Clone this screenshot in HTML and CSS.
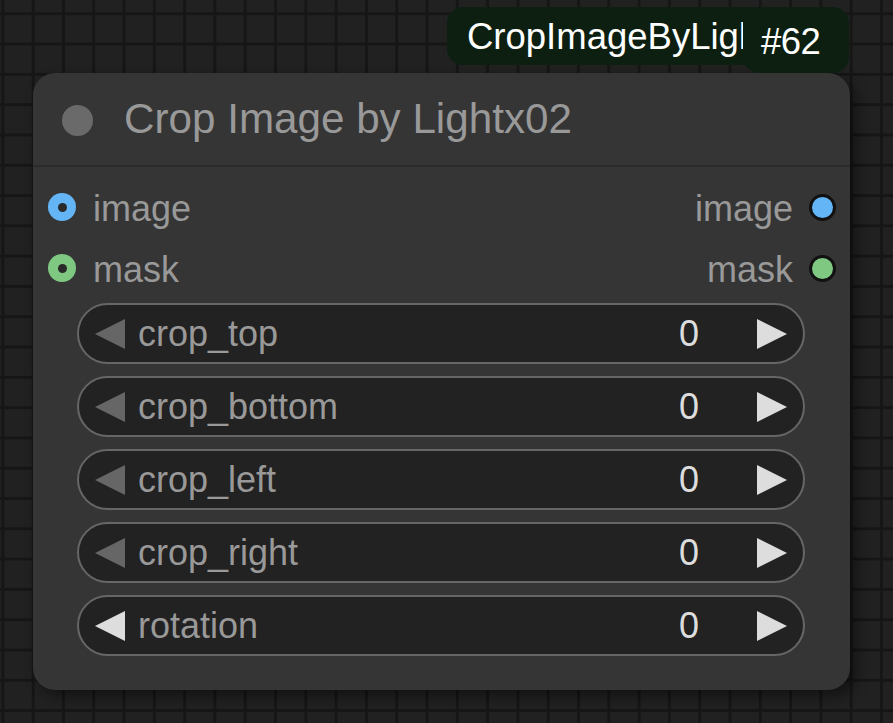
FILE: index.html
```html
<!DOCTYPE html>
<html>
<head>
<meta charset="utf-8">
<link rel="stylesheet" href="styles.css">
</head>
<body>
<div class="canvas">
  <div class="badges">
    <div class="pill pill-name"><span class="pill-text">CropImageByLightx02</span></div>
    <div class="pill pill-id">#62</div>
  </div>
  <div class="node">
    <div class="title">
      <span class="title-dot"></span>
      <span class="title-text">Crop Image by Lightx02</span>
    </div>
    <div class="body">
      <div class="slots">
        <div class="slot-row">
          <div class="in"><span class="dot-in blue"></span><span class="slot-label">image</span></div>
          <div class="out"><span class="slot-label">image</span><span class="dot-out blue"></span></div>
        </div>
        <div class="slot-row">
          <div class="in"><span class="dot-in green"></span><span class="slot-label">mask</span></div>
          <div class="out"><span class="slot-label">mask</span><span class="dot-out green"></span></div>
        </div>
      </div>
      <div class="widgets">
        <div class="widget"><span class="arrow-left dim"></span><span class="w-label">crop_top</span><span class="w-value">0</span><span class="arrow-right"></span></div>
        <div class="widget"><span class="arrow-left dim"></span><span class="w-label">crop_bottom</span><span class="w-value">0</span><span class="arrow-right"></span></div>
        <div class="widget"><span class="arrow-left dim"></span><span class="w-label">crop_left</span><span class="w-value">0</span><span class="arrow-right"></span></div>
        <div class="widget"><span class="arrow-left dim"></span><span class="w-label">crop_right</span><span class="w-value">0</span><span class="arrow-right"></span></div>
        <div class="widget"><span class="arrow-left"></span><span class="w-label">rotation</span><span class="w-value">0</span><span class="arrow-right"></span></div>
      </div>
    </div>
  </div>
</div>
</body>
</html>
```

FILE: styles.css
```css
html, body {
  margin: 0;
  padding: 0;
}
body {
  width: 893px;
  height: 723px;
  overflow: hidden;
  font-family: "Liberation Sans", Arial, sans-serif;
  background-color: #212121;
  background-image:
    linear-gradient(to right, #161616 2.6px, transparent 2.6px),
    linear-gradient(to bottom, #161616 2.6px, transparent 2.6px);
  background-size: 30.3px 30.3px;
  background-position: 1.4px 12.3px;
}
.canvas {
  padding-top: 7px;
}
.badges {
  display: flex;
  align-items: flex-start;
  margin-left: 447px;
  height: 66px;
}
.pill {
  background: #0d1f11;
  border-radius: 16px;
  color: #ffffff;
  font-size: 36.5px;
  display: flex;
  align-items: center;
  box-sizing: border-box;
}
.pill-name {
  height: 58px;
  width: 320px;
  padding-left: 20px;
  padding-top: 2px;
}
.pill-text {
  display: block;
  width: 276px;
  overflow: hidden;
  white-space: nowrap;
}
.pill-id {
  height: 66px;
  width: 106px;
  margin-left: -24px;
  padding-left: 18px;
  padding-top: 4px;
  letter-spacing: -0.5px;
}
.node {
  margin-left: 33px;
  width: 817px;
  height: 617px;
  background: #353535;
  border-radius: 22px;
  box-shadow: 6px 6px 14px rgba(0, 0, 0, 0.45);
  display: flex;
  flex-direction: column;
}
.title {
  height: 92px;
  border-bottom: 2px solid #2b2b2b;
  display: flex;
  align-items: center;
  padding-left: 29px;
  gap: 31px;
}
.title-dot {
  width: 31px;
  height: 31px;
  border-radius: 50%;
  background: #6a6a6a;
  margin-top: 2px;
}
.title-text {
  font-size: 42.2px;
  color: #999999;
}
.body {
  display: flex;
  flex-direction: column;
  padding-top: 10px;
}
.slots {
  display: flex;
  flex-direction: column;
  gap: 1px;
}
.slot-row {
  height: 60px;
  display: flex;
  align-items: center;
  justify-content: space-between;
  padding-left: 15px;
  padding-right: 14px;
}
.in, .out {
  display: flex;
  align-items: center;
}
.in {
  gap: 17px;
}
.out {
  gap: 16px;
}
.slot-label {
  font-size: 36px;
  color: #999999;
  padding-top: 3px;
}
.dot-in {
  width: 28px;
  height: 28px;
  border-radius: 50%;
  box-sizing: border-box;
  display: flex;
  align-items: center;
  justify-content: center;
}
.dot-in::after {
  content: "";
  width: 9px;
  height: 9px;
  border-radius: 50%;
  background: #2a2a2a;
}
.dot-out {
  width: 27px;
  height: 27px;
  border-radius: 50%;
  box-sizing: border-box;
  border: 3px solid #111111;
}
.blue { background: #64b5f6; }
.green { background: #7fc882; }
.widgets {
  display: flex;
  flex-direction: column;
  gap: 12px;
  padding: 5px 45px 0 44px;
}
.widget {
  height: 61px;
  box-sizing: border-box;
  border: 2.5px solid #666666;
  border-radius: 31px;
  background: #222222;
  display: flex;
  align-items: center;
  padding-left: 16px;
  padding-right: 16px;
}
.arrow-left, .arrow-right {
  width: 0;
  height: 0;
  border-top: 15px solid transparent;
  border-bottom: 15px solid transparent;
}
.arrow-left {
  border-right: 30px solid #dddddd;
}
.arrow-left.dim {
  border-right-color: #666666;
}
.arrow-right {
  border-left: 30px solid #dddddd;
}
.w-label {
  font-size: 36px;
  color: #999999;
  margin-left: 13px;
  flex: 1;
}
.w-value {
  font-size: 36px;
  color: #dddddd;
  margin-right: 58px;
}
```
